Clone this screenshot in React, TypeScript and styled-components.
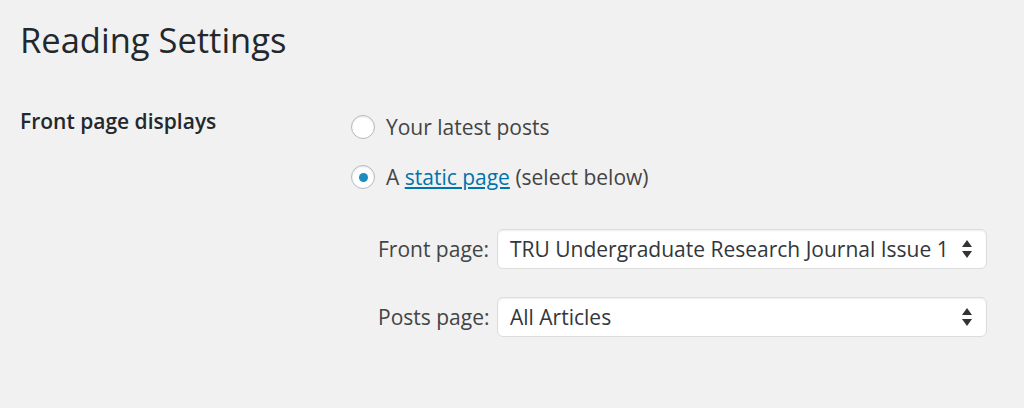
import React from 'react';
import styled, { createGlobalStyle } from 'styled-components';

const GlobalStyle = createGlobalStyle`
  html, body {
    margin: 0;
    padding: 0;
    background: #f1f1f1;
  }
  body {
    font-family: 'Open Sans', 'Noto Sans', sans-serif;
    color: #444444;
  }
`;

type PageSelect = {
  label: string;
  value: string;
};

const selects: PageSelect[] = [
  { label: 'Front page:', value: 'TRU Undergraduate Research Journal Issue 1' },
  { label: 'Posts page:', value: 'All Articles' },
];

const SortArrows = () => (
  <svg width="12" height="20" viewBox="0 0 12 20">
    <path d="M6 1 L11 8 L1 8 Z" fill="#333" />
    <path d="M6 19 L11 12 L1 12 Z" fill="#333" />
  </svg>
);

export default function App() {
  return (
    <>
      <GlobalStyle />
      <Page>
        <Title>Reading Settings</Title>
        <SettingRow>
          <RowLabel>Front page displays</RowLabel>
          <Options>
            <RadioLine>
              <Radio checked={false} />
              <span>Your latest posts</span>
            </RadioLine>
            <RadioLine>
              <Radio checked={true} />
              <span>
                A <Link href="#">static page</Link> (select below)
              </span>
            </RadioLine>
            <SelectList>
              {selects.map((s) => (
                <SelectLine key={s.label}>
                  <SelectLabel>{s.label}</SelectLabel>
                  <SelectBox>
                    <span>{s.value}</span>
                    <SortArrows />
                  </SelectBox>
                </SelectLine>
              ))}
            </SelectList>
          </Options>
        </SettingRow>
      </Page>
    </>
  );
}

const Page = styled.div`
  width: 1024px;
  height: 408px;
  box-sizing: border-box;
  padding: 16px 37px 0 20px;
  overflow: hidden;
`;

const Title = styled.h1`
  margin: 0;
  font-size: 34.5px;
  font-weight: 400;
  line-height: 48px;
  color: #23282d;
`;

const SettingRow = styled.div`
  display: flex;
  margin-top: 42px;
`;

const RowLabel = styled.div`
  width: 331px;
  flex-shrink: 0;
  font-size: 21px;
  font-weight: 600;
  color: #23282d;
  line-height: 30px;
`;

const Options = styled.div`
  flex: 1;
  display: flex;
  flex-direction: column;
`;

const RadioLine = styled.div`
  display: flex;
  align-items: center;
  gap: 11px;
  font-size: 21px;
  line-height: 30px;
  height: 30px;
  margin-bottom: 20px;
  &:first-child {
    margin-top: 6px;
  }
`;

const Radio = styled.span<{ checked: boolean }>`
  width: 24px;
  height: 24px;
  box-sizing: border-box;
  border: 1px solid #b4b9be;
  border-radius: 50%;
  background: #ffffff;
  box-shadow: inset 0 1px 2px rgba(0, 0, 0, 0.1);
  display: flex;
  align-items: center;
  justify-content: center;
  flex-shrink: 0;

  &::after {
    content: '';
    display: ${(p) => (p.checked ? 'block' : 'none')};
    width: 9px;
    height: 9px;
    border-radius: 50%;
    background: #1e8cbe;
  }
`;

const Link = styled.a`
  color: #0073aa;
  text-decoration: underline;
`;

const SelectList = styled.div`
  display: flex;
  flex-direction: column;
  gap: 28px;
  padding-left: 27px;
  margin-top: 17px;
`;

const SelectLine = styled.div`
  display: flex;
  align-items: center;
  gap: 8px;
`;

const SelectLabel = styled.span`
  font-size: 21px;
  width: 111px;
  flex-shrink: 0;
  white-space: nowrap;
`;

const SelectBox = styled.div`
  width: 490px;
  height: 40px;
  box-sizing: border-box;
  display: flex;
  align-items: center;
  justify-content: space-between;
  padding: 0 13px 0 12px;
  background: #ffffff;
  border: 1px solid #dddddd;
  border-radius: 6px;
  box-shadow: inset 0 1px 2px rgba(0, 0, 0, 0.07);
  font-size: 21px;
  color: #32373c;
  white-space: nowrap;
`;
